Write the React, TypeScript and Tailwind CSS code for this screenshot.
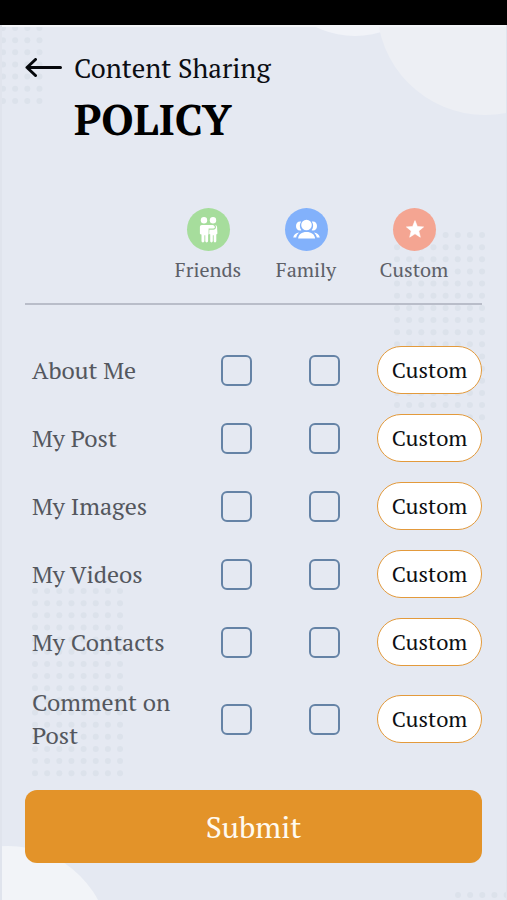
import React, { useState } from "react";

const ITEMS = [
  "About Me",
  "My Post",
  "My Images",
  "My Videos",
  "My Contacts",
  "Comment on Post",
];

interface DotsProps {
  cols: number;
  rows: number;
  className?: string;
}

const Dots: React.FC<DotsProps> = ({ cols, rows, className = "" }) => {
  const pitch = 12.15;
  return (
    <svg
      aria-hidden="true"
      width={Math.ceil(cols * pitch)}
      height={Math.ceil(rows * pitch)}
      className={`absolute fill-[#dce2eb] ${className}`}
    >
      {Array.from({ length: cols * rows }, (_, i) => (
        <circle
          key={i}
          cx={4 + (i % cols) * pitch}
          cy={4 + Math.floor(i / cols) * pitch}
          r={3}
        />
      ))}
    </svg>
  );
};

const Backdrop: React.FC = () => (
  <div aria-hidden="true" className="absolute inset-0 -z-10 overflow-hidden">
    <div className="absolute -top-[167px] right-[63px] h-[178px] w-[178px] rounded-full bg-[#f1f3f8]" />
    <div className="absolute -top-[126px] -right-[86px] h-[216px] w-[216px] rounded-full bg-[#edeff4]" />
    <div className="absolute -bottom-[150px] -left-[94px] h-[204px] w-[204px] rounded-full bg-[#f2f4f8]" />
    <Dots cols={4} rows={7} className="-left-px -top-px" />
    <Dots cols={8} rows={16} className="right-[16px] top-[206px]" />
    <Dots cols={8} rows={16} className="left-[31px] top-[562px]" />
    <Dots cols={5} rows={1} className="-right-[8px] bottom-[-4px]" />
    <div className="absolute inset-x-0 top-0 h-[2px] bg-[#f3f5f9]" />
    <div className="absolute inset-y-0 left-0 w-[2px] bg-[#e0e4ed]" />
    <div className="absolute inset-y-0 right-0 w-px bg-[#e0e4ed]" />
  </div>
);

const FriendsIcon = () => (
  <svg viewBox="0 0 43 43" className="h-full w-full" fill="#fff" aria-hidden="true">
    <circle cx="17" cy="12.2" r="3.2" />
    <circle cx="26" cy="12.2" r="3.2" />
    <path d="M14.8 17H25c1 0 1.9.4 2.4 1 1 1.2.3 2.6-1.2 2.6h-4.6v5.6l-.5.6v6.3c0 1.9-2.8 1.9-2.8 0v-5.8h-.9v5.8c0 1.9-2.9 1.9-2.9 0v-6.7h-.5c-.7 0-1.1-.5-1.1-1.1v-6.2c0-1.2.8-2.1 1.9-2.1z" />
    <path d="M28.2 17c1.2.3 1.8 1.1 1.9 2.2l.3 6c0 .8-.5 1.1-1.1 1.1v6.8c0 1.8-2.6 1.8-2.6 0v-5.8h-.9v5.8c0 1.8-2.6 1.8-2.6 0v-6.8c-.8 0-1.1-.5-1-1.1l.2-3.5h4c2.4 0 3.4-2.9 1.8-4.7z" />
  </svg>
);

const FamilyIcon = () => (
  <svg viewBox="0 0 43 43" className="h-full w-full" fill="#fff" aria-hidden="true">
    <circle cx="21.5" cy="17" r="5.3" />
    <path d="M13.1 30.4c.4-4 3.6-6.3 8.4-6.3s8.1 2.3 8.6 6.3z" />
    <path d="M16.2 13.6c-2.9-.8-5.2 1.2-5.2 4.4 0 3.4 2.5 5.4 5.4 4.3-2-2.5-2.1-6-.2-8.7zM26.8 13.6c2.9-.8 5.2 1.2 5.2 4.4 0 3.4-2.5 5.4-5.4 4.3 2-2.5 2.1-6 .2-8.7z" />
    <path d="M14.2 24.4c-3.2.2-5.5 2.2-6 5h3c.4-2 1.4-3.7 3-5zM28.8 24.4c3.2.2 5.5 2.2 6 5h-3c-.4-2-1.4-3.7-3-5z" />
  </svg>
);

const StarIcon = () => (
  <svg viewBox="0 0 43 43" className="h-full w-full" fill="#fff" aria-hidden="true">
    <path
      d="M22 12.6l2.4 5.9 6.2.4-4.8 4.1 1.5 6.2-5.3-3.4-5.3 3.4 1.5-6.2-4.8-4.1 6.2-.4z"
      stroke="#fff"
      strokeWidth="0.6"
      strokeLinejoin="round"
    />
  </svg>
);

const AUDIENCES = [
  { label: "Friends", color: "bg-[#a6dd9c]", icon: <FriendsIcon /> },
  { label: "Family", color: "bg-[#82b1fb]", icon: <FamilyIcon /> },
  { label: "Custom", color: "bg-[#f4a592]", icon: <StarIcon /> },
];

const App: React.FC = () => {
  const [checked, setChecked] = useState<Record<string, boolean>>({});

  const toggle = (key: string) =>
    setChecked((prev) => ({ ...prev, [key]: !prev[key] }));

  return (
    <div className="flex min-h-screen flex-col bg-[#e5e9f2] font-['PT_Serif','Liberation_Serif',serif]">
      <div className="h-[25px] bg-black" />

      <div className="relative isolate flex-1 px-[25px] pb-[37px]">
        <Backdrop />

        {/* Title */}
        <header className="flex items-start gap-3 pt-[25px]">
          <button type="button" aria-label="Back" className="mt-2 h-5 w-[37px]">
            <svg viewBox="0 0 37 20" className="h-5 w-[37px]" fill="none" stroke="#05070b" strokeWidth="3" strokeLinecap="round" strokeLinejoin="round">
              <path d="M35.5 9.5H2.2M10.5 1.5L2 9.5l8.5 8" />
            </svg>
          </button>
          <h1 className="text-[#0b0d12]">
            <span className="block text-[27px] leading-[36px]">Content Sharing</span>
            <span className="mt-[7px] block text-[43px] leading-[52px] font-bold text-black">POLICY</span>
          </h1>
        </header>

        <form onSubmit={(e) => e.preventDefault()}>
          {/* Column headings */}
          <div className="mt-[63px] grid grid-cols-[1fr_98px_98px_118px] border-b-2 border-[#b9bdc9] pr-[9px] pb-[19px]">
            {AUDIENCES.map((a, i) => (
              <div key={a.label} className={`flex flex-col items-center ${i === 0 ? "col-start-2" : ""}`}>
                <span className={`h-[43px] w-[43px] rounded-full ${a.color}`}>{a.icon}</span>
                <span className="mt-[5px] text-[20px] leading-[28px] text-[#5d6068]">{a.label}</span>
              </div>
            ))}
          </div>

          {/* Sharing rows */}
          <ul className="mt-[41px] flex flex-col gap-5">
            {ITEMS.map((item) => (
              <li key={item} className="grid min-h-12 grid-cols-[1fr_88px_88px_114px] items-center">
                <span className="pl-[7px] text-[24px] leading-[33px] text-[#54575e]">{item}</span>
                {["Friends", "Family"].map((who) => (
                  <input
                    key={who}
                    type="checkbox"
                    aria-label={`${item}: ${who}`}
                    checked={!!checked[`${item}-${who}`]}
                    onChange={() => toggle(`${item}-${who}`)}
                    className="h-[31px] w-[31px] appearance-none justify-self-center rounded-[6px] border-2 border-[#6583a6] checked:bg-[#6583a6]"
                  />
                ))}
                <button
                  type="button"
                  className="h-12 w-[105px] justify-self-end rounded-full border border-[#e39a3c] bg-white text-[22px] leading-[30px] text-[#0d0f12]"
                >
                  Custom
                </button>
              </li>
            ))}
          </ul>

          <button
            type="submit"
            className="mt-[38px] h-[73px] w-full rounded-[12px] bg-[#e39329] text-[30px] leading-[40px] text-[#fffaf0]"
          >
            Submit
          </button>
        </form>
      </div>
    </div>
  );
};

export default App;
